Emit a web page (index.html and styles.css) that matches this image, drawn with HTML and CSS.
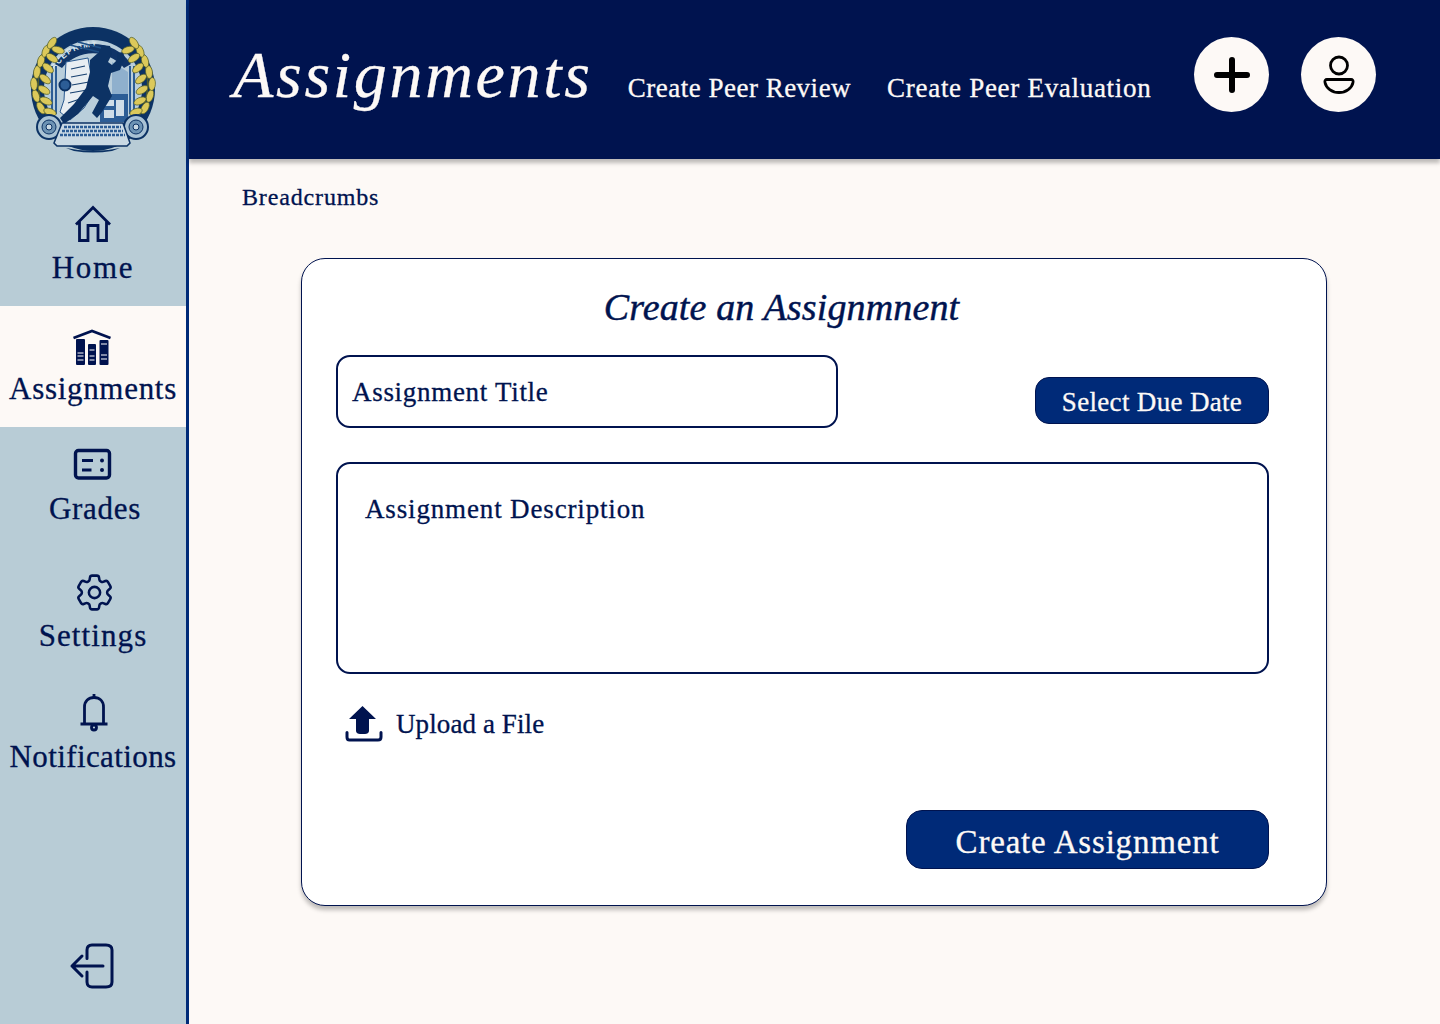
FILE: index.html
```html
<!DOCTYPE html>
<html lang="en">
<head>
<meta charset="utf-8">
<title>Create an Assignment</title>
<link rel="stylesheet" href="styles.css">
</head>
<body>
<div class="app">
  <aside class="sidebar">
    <div class="logo">
      <svg width="130" height="130" viewBox="27 24 130 130">
        <defs>
          <path id="arc" d="M52 80 A42 42 0 0 1 134 80"/>
          <g id="laurel">
            <path d="M60 130 C36 112 30 72 52 42" fill="none" stroke="#4d5a2c" stroke-width="1.600"/>
            <g fill="#dcc95a" stroke="#55602a" stroke-width=".7">
              <ellipse cx="41" cy="108" rx="3.400" ry="6.500" transform="rotate(-30 41 108)"/>
              <ellipse cx="36" cy="96" rx="3.400" ry="6.500" transform="rotate(-18 36 96)"/>
              <ellipse cx="34" cy="84" rx="3.400" ry="6.500" transform="rotate(-4 34 84)"/>
              <ellipse cx="37" cy="72" rx="3.400" ry="6.500" transform="rotate(8 37 72)"/>
              <ellipse cx="41" cy="61" rx="3.400" ry="6.500" transform="rotate(16 41 61)"/>
              <ellipse cx="46" cy="51" rx="3.400" ry="6.500" transform="rotate(24 46 51)"/>
              <ellipse cx="52" cy="43" rx="3.400" ry="6.500" transform="rotate(36 52 43)"/>
              <ellipse cx="50" cy="112" rx="3.400" ry="6.500" transform="rotate(-70 50 112)"/>
              <ellipse cx="46" cy="101" rx="3.400" ry="6.500" transform="rotate(-66 46 101)"/>
              <ellipse cx="44" cy="90" rx="3.400" ry="6.500" transform="rotate(-60 44 90)"/>
              <ellipse cx="45" cy="79" rx="3.400" ry="6.500" transform="rotate(-52 45 79)"/>
              <ellipse cx="48" cy="68" rx="3.400" ry="6.500" transform="rotate(-50 48 68)"/>
              <ellipse cx="52" cy="58" rx="3.400" ry="6.500" transform="rotate(-56 52 58)"/>
              <ellipse cx="58" cy="50" rx="3.400" ry="6.500" transform="rotate(-72 58 50)"/>
            </g>
          </g>
        </defs>
        <circle cx="93" cy="89" r="62" fill="#0c3264"/>
        <circle cx="93" cy="89" r="49" fill="#b9cedb"/>
        <path d="M55 64 A46 46 0 0 1 131 64 L124 68 A40 40 0 0 0 62 68 Z" fill="#0f3468"/>
        <text class="logo-text"><textPath href="#arc" startOffset="9%">SCEPRIMT</textPath></text>
        <path d="M52 66V114M56 66V114M130 66V114M134 66V114" stroke="#2c5d96" stroke-width="2"/>
        <rect x="100" y="94" width="28" height="28" fill="#2c5d96"/>
        <path d="M112 62 L128 72 L128 94 L112 94 Z" fill="#8fb0cd"/>
        <path d="M104 100H114V106H104ZM116 100H124V116H116ZM104 110H114V118H104Z" fill="#cfdde8"/>
        <path d="M66 62 L88 58 L94 92 L84 108 L70 120 L60 112 L64 100 Z" fill="#e8eef2" stroke="#2a5a90" stroke-width="1"/>
        <path d="M71 69 L85 66 M71 77 L87 74 M72 85 L89 82 M70 93 L87 90 M68 103 L83 98" stroke="#17406f" stroke-width="1.200"/>
        <circle cx="65" cy="85" r="5.500" fill="#2c5d96" stroke="#0c3264" stroke-width="2"/>
        <path d="M90 60 L98 53 L102 45 L110 46 L112 54 L108 62 L112 65 L117 60 L117 53 L123 52 L125 58 L120 70 L111 73 L108 86 L112 96 L102 112 L97 118 L92 113 L99 100 L93 96 L78 114 L64 124 L60 118 L74 104 L86 88 L90 72 Z" fill="#0c3264"/>
        <path d="M70 45 L99 52 M78 42 L101 48" stroke="#1d4f86" stroke-width="1.600"/>
        <use href="#laurel"/>
        <use href="#laurel" transform="translate(186 0) scale(-1 1)"/>
        <circle cx="49" cy="127" r="12" fill="#a9c2d4" stroke="#0c3264" stroke-width="2"/>
        <circle cx="49" cy="127" r="7" fill="#6d93b4" stroke="#0c3264"/>
        <circle cx="49" cy="127" r="3" fill="#c9d9e4" stroke="#0c3264"/>
        <circle cx="136" cy="127" r="12" fill="#a9c2d4" stroke="#0c3264" stroke-width="2"/>
        <circle cx="136" cy="127" r="7" fill="#6d93b4" stroke="#0c3264"/>
        <circle cx="136" cy="127" r="3" fill="#c9d9e4" stroke="#0c3264"/>
        <path d="M54 143 L62 123 L123 123 L130 143 L127 146 H57 Z" fill="#c9d9e4" stroke="#0c3264" stroke-width="1.500"/>
        <path d="M64 127 H121 M62 131 H123 M60 135 H125" stroke="#2c5d96" stroke-width="2.400" stroke-dasharray="3 1"/>
        <path d="M66 148 Q93 154 120 148 L112 151 Q93 154 74 151 Z" fill="#0c3264"/>
      </svg>
    </div>
    <nav class="nav">
      <a class="nav-item nav-home">
        <span class="nav-icon"><svg width="40" height="40" viewBox="0 0 40 40"><path d="M3 20.500 20 3.500 37 20.500M6.500 17.500V36.500H15V21.500H25V36.500H33.500V17.500" fill="none" stroke="#00134f" stroke-width="2.800" stroke-linejoin="miter"/></svg></span>
        <span class="nav-label label-home">Home</span>
      </a>
      <a class="nav-item nav-active">
        <span class="nav-icon nav-icon-left"><svg width="40" height="40" viewBox="0 0 40 40"><path d="M1.500 12 20 5 38.500 12" fill="none" stroke="#00134f" stroke-width="2.600"/><g fill="#00134f"><rect x="4" y="13" width="9" height="26" rx="1"/><rect x="16" y="18" width="8" height="21" rx="1"/><rect x="27.500" y="14" width="9" height="25" rx="1"/></g><path d="M5.500 27H11.500M5.500 30H11.500M5.500 34H11.500M17.500 24H22.500M17.500 30H22.500M17.500 34H22.500M29 18H35M29 29H35M29 33H35" stroke="#fff" stroke-width="1"/></svg></span>
        <span class="nav-label label-assignments">Assignments</span>
      </a>
      <a class="nav-item nav-grades">
        <span class="nav-icon nav-icon-left"><svg width="40" height="40" viewBox="0 0 40 40"><rect x="3.500" y="6.500" width="34" height="27.500" rx="3" fill="none" stroke="#00134f" stroke-width="3.400"/><path d="M10 16.500H21M10 26H19.500" stroke="#00134f" stroke-width="3"/><circle cx="30" cy="16.500" r="2" fill="#00134f"/><circle cx="30" cy="26" r="2" fill="#00134f"/></svg></span>
        <span class="nav-label nav-label-shift">Grades</span>
      </a>
      <a class="nav-item nav-settings">
        <span class="nav-icon nav-icon-shift"><svg width="45" height="45" viewBox="0 0 24 24" fill="none" stroke="#00134f" stroke-width="1.350" stroke-linejoin="round"><path d="M9.594 3.940c.09-.542.56-.94 1.110-.94h2.593c.55 0 1.020.398 1.110.94l.213 1.281c.063.374.313.686.645.870.074.040.147.083.22.127.325.196.72.257 1.075.124l1.217-.456a1.125 1.125 0 0 1 1.370.49l1.296 2.247a1.125 1.125 0 0 1-.26 1.431l-1.003.827c-.293.241-.438.613-.43.992a7.723 7.723 0 0 1 0 .255c-.008.378.137.75.43.991l1.004.827c.424.35.534.955.26 1.430l-1.298 2.247a1.125 1.125 0 0 1-1.369.491l-1.217-.456c-.355-.133-.75-.072-1.076.124a6.470 6.470 0 0 1-.22.128c-.331.183-.581.495-.644.869l-.213 1.281c-.09.543-.56.94-1.110.94h-2.594c-.55 0-1.019-.398-1.110-.94l-.213-1.281c-.062-.374-.312-.686-.644-.87a6.520 6.520 0 0 1-.22-.127c-.325-.196-.72-.257-1.076-.124l-1.217.456a1.125 1.125 0 0 1-1.369-.49l-1.297-2.247a1.125 1.125 0 0 1 .26-1.431l1.004-.827c.292-.24.437-.613.43-.991a6.932 6.932 0 0 1 0-.255c.007-.38-.138-.751-.43-.992l-1.004-.827a1.125 1.125 0 0 1-.26-1.430l1.297-2.247a1.125 1.125 0 0 1 1.370-.491l1.216.456c.356.133.751.072 1.076-.124.072-.044.146-.086.22-.128.332-.183.582-.495.644-.869l.214-1.280Z"/><circle cx="12" cy="12" r="3"/></svg></span>
        <span class="nav-label label-settings">Settings</span>
      </a>
      <a class="nav-item nav-notifications">
        <span class="nav-icon nav-icon-shift"><svg width="40" height="40" viewBox="0 0 40 40" fill="none" stroke="#00134f" stroke-width="2.800"><path d="M6.500 31H33.500M10.500 31V14C10.500 8 14.500 4.500 20 4.500S29.500 8 29.500 14V31"/><circle cx="20" cy="34.500" r="2.500"/><path d="M20 1V4"/></svg></span>
        <span class="nav-label label-notifications">Notifications</span>
      </a>
    </nav>
    <a class="logout">
      <svg width="48" height="48" viewBox="0 0 48 48" fill="none" stroke="#00134f" stroke-width="3" stroke-linecap="round" stroke-linejoin="round"><path d="M18 16.500V8C18 4.500 20 3 23 3H37C41 3 43 5 43 8V40C43 43 41 45 37 45H23C20 45 18 43 18 40V30"/><path d="M34 24H3M13 14 3 24 13 34"/></svg>
    </a>
  </aside>
  <div class="content">
    <header class="topbar">
      <h1 class="page-title">Assignments</h1>
      <a class="top-link top-link-review">Create Peer Review</a>
      <a class="top-link top-link-eval">Create Peer Evaluation</a>
      <button class="round-btn round-add" aria-label="Add"><svg width="44" height="44" viewBox="0 0 44 44" stroke="#000" stroke-width="6" stroke-linecap="round"><path d="M22 7V37M7 22H37"/></svg></button>
      <button class="round-btn" aria-label="Profile"><svg width="44" height="44" viewBox="0 0 44 44" fill="none" stroke="#000" stroke-width="2.800"><circle cx="22" cy="12.500" r="8.500"/><path d="M10 26.500H34C35.500 26.500 36.500 27.500 36 29.500C35 35 29 39.500 22 39.500S9 35 8 29.500C7.500 27.500 8.500 26.500 10 26.500Z"/></svg></button>
    </header>
    <main class="main">
      <div class="breadcrumbs">Breadcrumbs</div>
      <form class="card">
        <h2 class="card-title">Create an Assignmnent</h2>
        <div class="row">
          <div class="field field-title">Assignment Title</div>
          <button type="button" class="btn btn-date">Select Due Date</button>
        </div>
        <div class="field field-desc">Assignment Description</div>
        <div class="upload">
          <svg width="38" height="38" viewBox="0 0 38 38"><path d="M17.500 1 31 14H24V26C24 28 22 29 20 29H15C13 29 11 28 11 26V14H4Z" fill="#00134f"/><path d="M2 27.500V32C2 34 3 35 4.500 35H33C35 35 36 34 36 32V27.500" fill="none" stroke="#00134f" stroke-width="3" stroke-linecap="round"/></svg>
          <span class="upload-label">Upload a File</span>
        </div>
        <div class="actions"><button type="button" class="btn btn-create">Create Assignment</button></div>
      </form>
    </main>
  </div>
</div>
</body>
</html>
```

FILE: styles.css
```css
* { box-sizing: border-box; }
html, body { margin: 0; height: 100%; }
body {
  background: #fdf9f6;
  color: #00134f;
  font-family: "Liberation Serif", serif;
  -webkit-text-stroke: .3px currentColor;
  overflow: hidden;
}
h1, h2 { margin: 0; font-weight: 400; }
button { font-family: inherit; cursor: pointer; }

.app { display: flex; height: 1024px; }

.sidebar {
  width: 189px;
  flex: none;
  display: flex;
  flex-direction: column;
  background: #b8ccd6;
  border-right: 3px solid #002a78;
}
.logo { height: 190px; display: flex; padding: 24px 0 0 27px; }
.nav { display: flex; flex-direction: column; }
.nav-item { display: flex; flex-direction: column; align-items: center; gap: 5px; }
.nav-icon { height: 40px; display: flex; align-items: center; justify-content: center; }
.nav-icon-shift { transform: translateX(1px); }
.nav-icon-left { transform: translateX(-1px); }
.nav-label { font-size: 31px; line-height: 36px; letter-spacing: .7px; white-space: nowrap; transform: translateY(1px); }
.nav-label-shift { transform: translate(2px, 2px); }
.label-home { letter-spacing: 1.700px; }
.label-assignments { transform: none; }
.label-settings { letter-spacing: 1.100px; }
.label-notifications { letter-spacing: .4px; }
.nav-home { height: 116px; padding-top: 14px; }
.nav-active { height: 121px; padding-top: 20px; background: #fdf9f6; }
.nav-grades { height: 126px; padding-top: 17px; }
.nav-settings { height: 121px; padding-top: 19px; }
.nav-notifications { padding-top: 19px; }
.logout { margin-top: auto; padding: 0 0 34px 0; display: flex; justify-content: center; }

.content { flex: 1; display: flex; flex-direction: column; min-width: 0; }

.topbar {
  height: 159px;
  flex: none;
  background: #00134f;
  color: #fdf9f6;
  display: flex;
  align-items: center;
  padding: 0 64px 10px 44px;
  box-shadow: 0 4px 4px rgba(0, 0, 0, .25);
  position: relative;
}
.page-title { font-size: 66px; font-style: italic; letter-spacing: 2.700px; white-space: nowrap; }
.top-link { font-size: 27px; letter-spacing: .5px; white-space: nowrap; padding-top: 28px; }
.top-link-review { margin-left: 35px; }
.top-link-eval { margin-left: 36px; letter-spacing: .7px; }
.round-btn {
  width: 75px;
  height: 75px;
  border-radius: 50%;
  border: 0;
  padding: 0;
  background: #fdf9f6;
  display: flex;
  align-items: center;
  justify-content: center;
  flex: none;
  margin-left: 32px;
}
.round-add { margin-left: auto; }

.main { flex: 1; padding: 24px 113px 0 53px; }
.breadcrumbs { font-size: 24px; line-height: 28px; letter-spacing: .85px; }
.card {
  margin: 47px 0 0 59px;
  height: 648px;
  width: 1026px;
  background: #fff;
  border: 1px solid #00134f;
  border-radius: 24px;
  box-shadow: 0 4px 4px rgba(0, 0, 0, .25);
  padding: 24px 57px 0 34px;
}
.card-title {
  font-size: 38px;
  line-height: 48px;
  font-style: italic;
  letter-spacing: .15px;
  text-align: center;
  padding-right: 42px;
  -webkit-text-stroke-width: .45px;
}
.row { display: flex; justify-content: space-between; align-items: flex-end; margin-top: 24px; }
.field {
  background: #fff;
  border: 2px solid #00134f;
  border-radius: 14px;
  font-size: 27px;
  letter-spacing: .7px;
}
.field-title { width: 502px; height: 73px; display: flex; align-items: center; padding: 2px 0 0 14px; }
.btn {
  background: #002a78;
  color: #fdf9f6;
  border: 1px solid #00134f;
}
.btn-date { width: 234px; height: 47px; margin-bottom: 4px; border-radius: 14px; font-size: 27px; padding: 4px 0 0; letter-spacing: .33px; }
.field-desc { margin-top: 34px; height: 212px; padding: 28px 0 0 27px; line-height: 34px; letter-spacing: .85px; }
.upload { display: flex; align-items: center; gap: 13px; margin-top: 31px; padding-left: 9px; }
.upload-label { font-size: 27px; letter-spacing: .1px; }
.actions { display: flex; justify-content: flex-end; margin-top: 67px; }
.btn-create { width: 363px; height: 59px; border-radius: 16px; font-size: 33px; padding: 5px 0 0; letter-spacing: .8px; }
.logo-text { font-size: 8px; font-weight: 700; letter-spacing: 1.200px; fill: #dbe6ee; font-family: "Liberation Sans", sans-serif; -webkit-text-stroke: 0; }
```
